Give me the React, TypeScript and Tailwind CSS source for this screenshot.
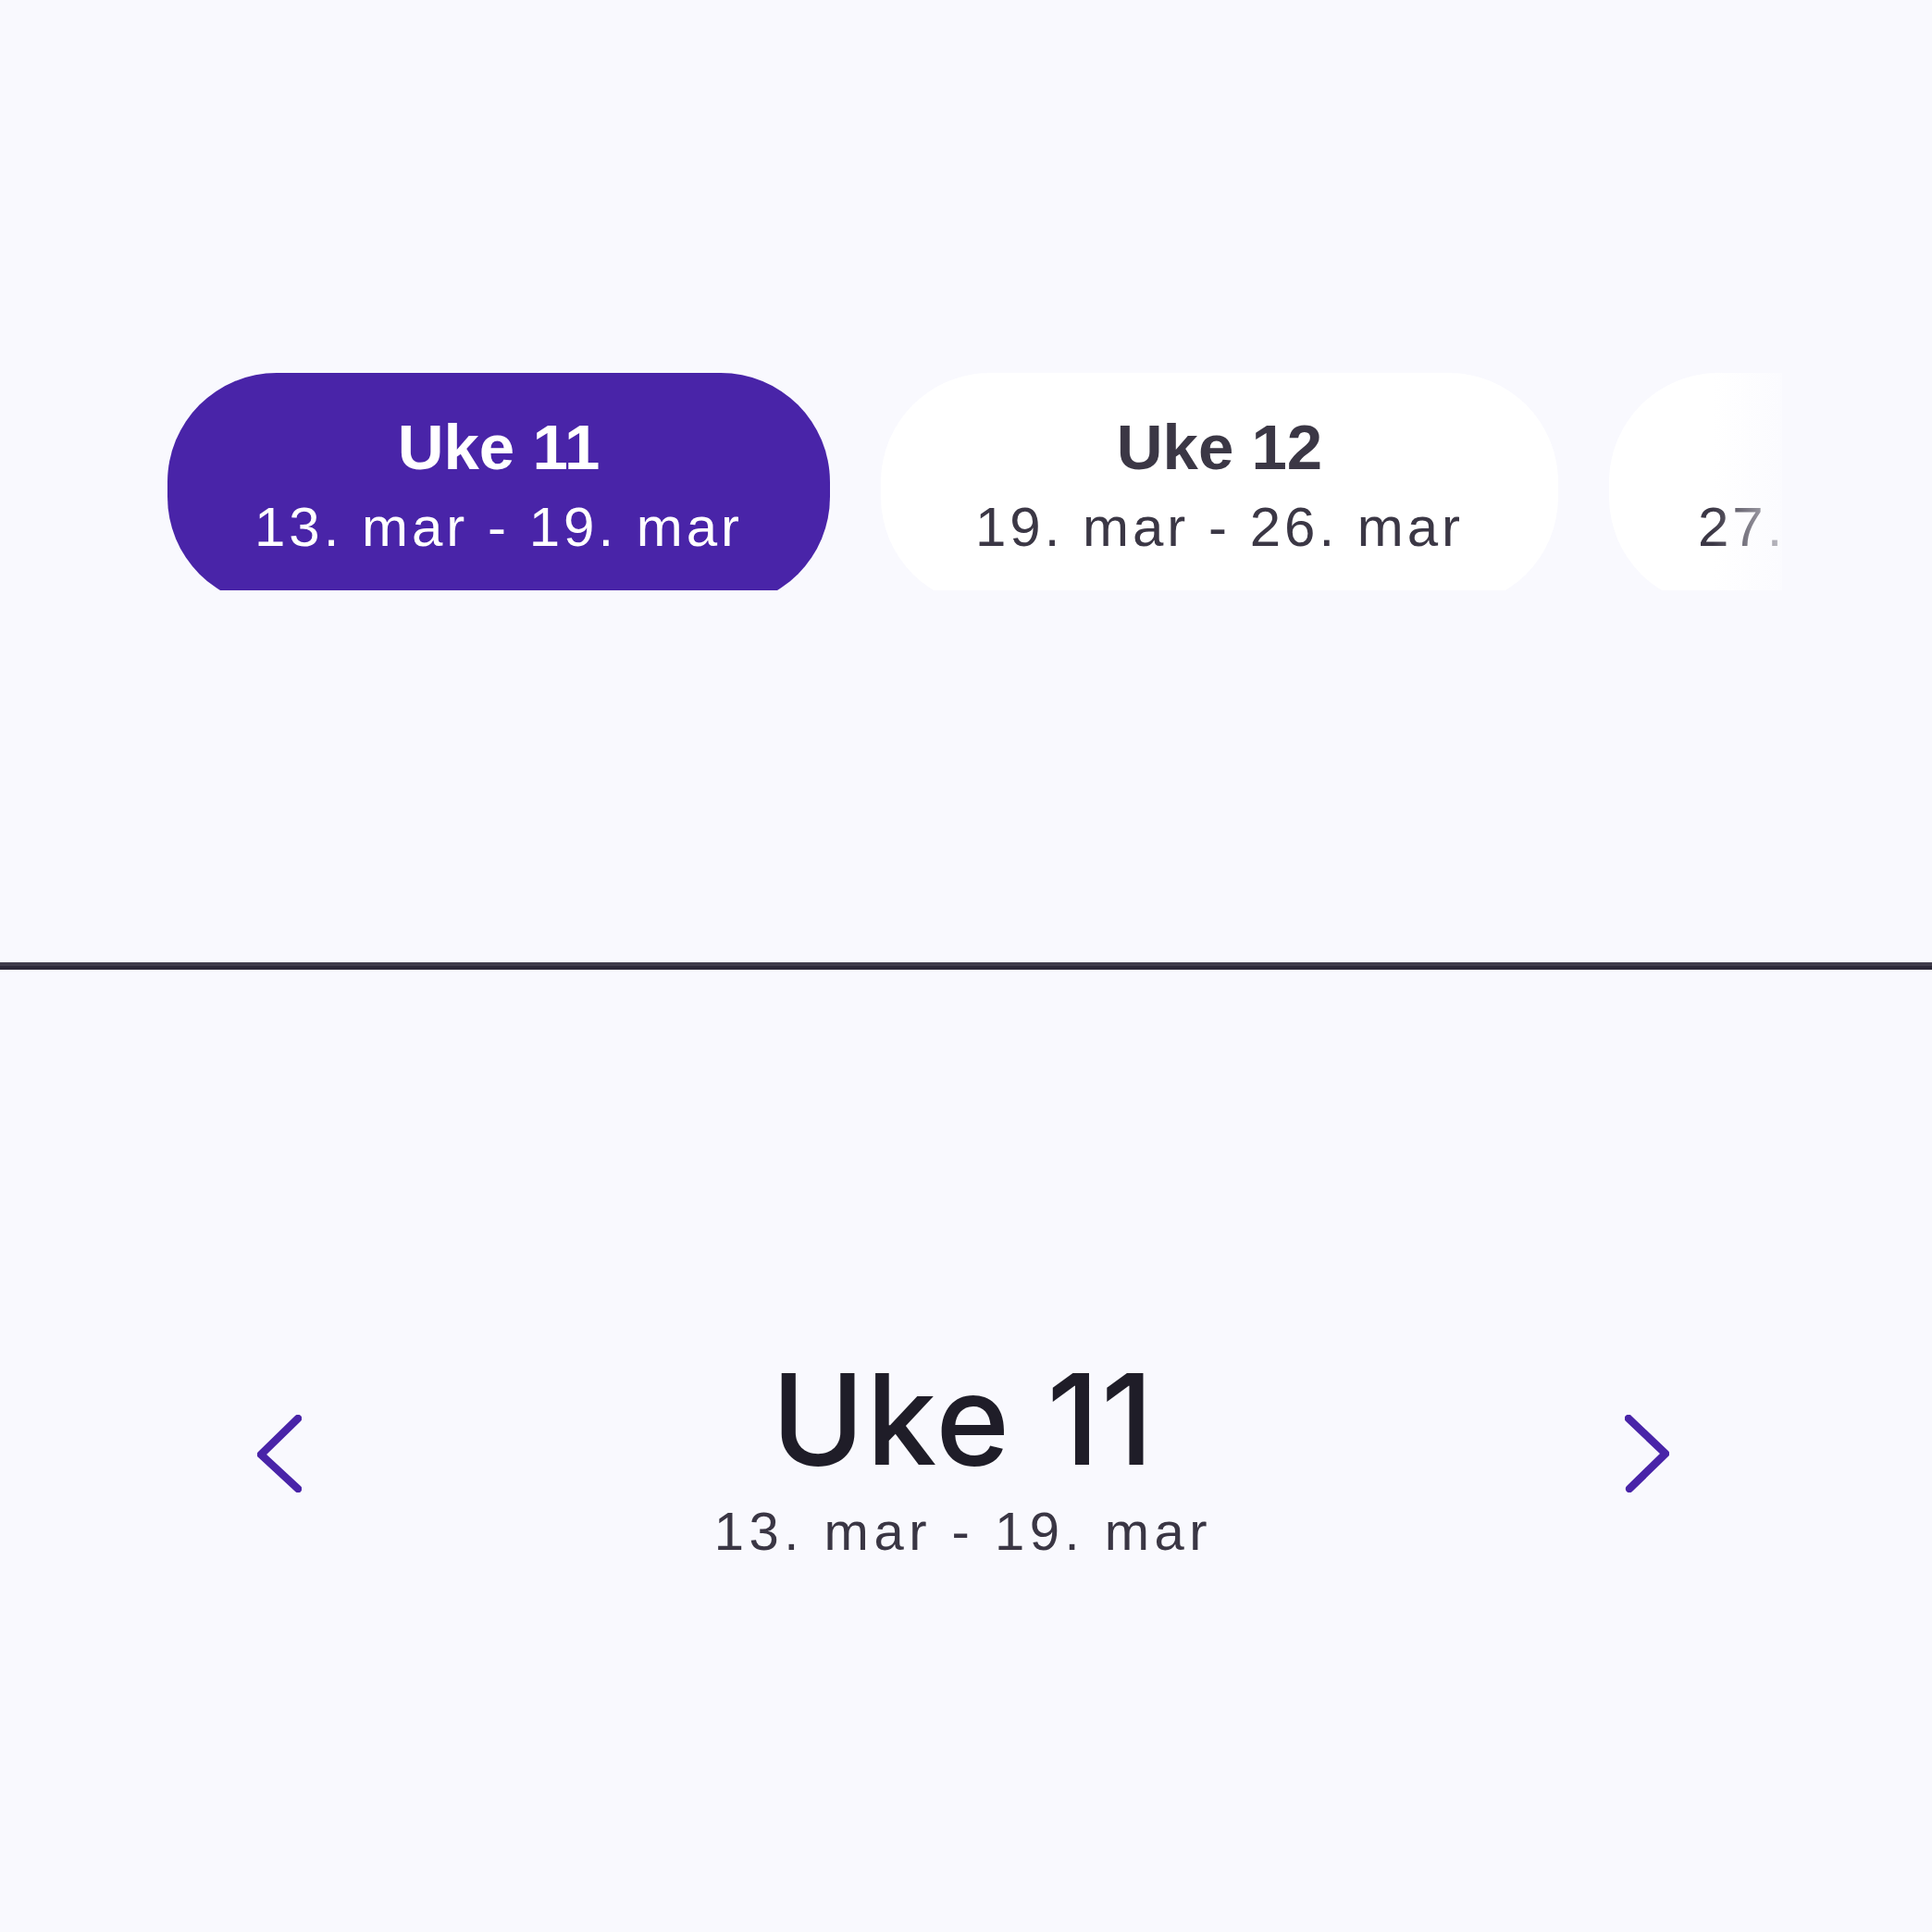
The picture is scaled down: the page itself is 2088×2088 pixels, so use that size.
const weeks = [
  { label: 'Uke 11', range: '13. mar - 19. mar', w: 'w-[716px]', active: true },
  { label: 'Uke 12', range: '19. mar - 26. mar', w: 'w-[732px]', active: false },
  { label: 'Uke 13', range: '27. mar - 2. apr', w: 'w-[666px]', active: false },
];

function Chevron({ dir }: { dir: 'left' | 'right' }) {
  return (
    <svg width="48" height="84" viewBox="0 0 48 84" fill="none" className="mt-[6px] shrink-0">
      <path
        d={dir === 'left' ? 'M44 4 L4 43 L44 80' : 'M4 4 L44 42 L5 80'}
        stroke="#4924a8"
        strokeWidth="8.5"
        strokeLinecap="round"
        strokeLinejoin="round"
      />
    </svg>
  );
}

export default function App() {
  return (
    <div className="flex h-[2088px] w-[2088px] flex-col bg-[#f9f9fe] font-['Liberation_Sans',sans-serif]">
      {/* week strip */}
      <section className="flex h-[1040px] items-center">
        <div className="relative ml-[181px] flex h-[235px] w-[1745px] gap-[55px] overflow-hidden">
          {weeks.map((wk) => (
            <div
              key={wk.label}
              className={`flex h-[252px] ${wk.w} shrink-0 flex-col items-center rounded-[118px] pt-[40px] ${
                wk.active ? 'bg-[#4924a8] text-white' : 'bg-white text-[#3b3745]'
              }`}
            >
              <p className="text-[69px] font-bold leading-[82px]">{wk.label}</p>
              <p className="text-[60px] leading-[90px] tracking-[4px] whitespace-nowrap">{wk.range}</p>
            </div>
          ))}
          <div className="pointer-events-none absolute right-0 top-0 h-full w-[75px] bg-linear-to-r from-[#f9f9fe]/0 to-[#f9f9fe]/70" />
        </div>
      </section>

      <div className="h-[4px] bg-[#403c4b]" />
      <div className="h-[4px] bg-[#2c2838]" />

      {/* current week */}
      <section className="flex flex-1 items-center justify-between pl-[278px] pr-[284px]">
        <Chevron dir="left" />
        <div className="mt-[12px] flex flex-col items-center">
          <p className="font-['Inter',sans-serif] text-[136px] font-medium leading-[162px] tracking-[2px] text-[#1f1d28]">
            Uke 11
          </p>
          <p className="text-[58px] leading-[80px] tracking-[5.5px] text-[#3a3644]">13. mar - 19. mar</p>
        </div>
        <Chevron dir="right" />
      </section>
    </div>
  );
}
